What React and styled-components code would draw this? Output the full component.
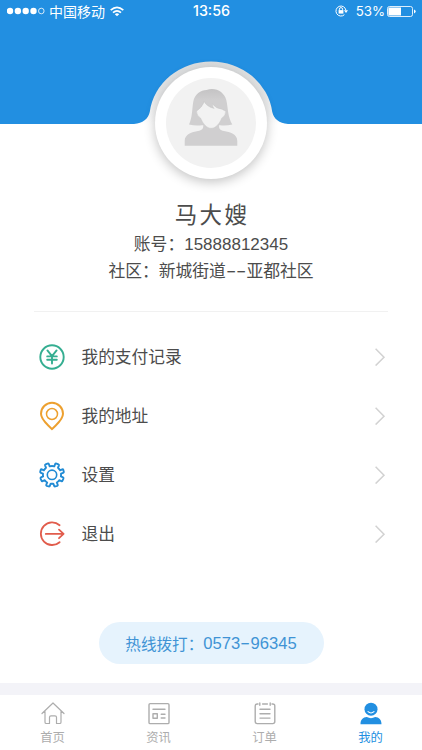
import React from "react";
import styled, { createGlobalStyle } from "styled-components";

const BLUE = "#228fe1";

const GlobalStyle = createGlobalStyle`
  * { box-sizing: border-box; }
  body {
    margin: 0;
    background: #fff;
    color: #4c4c4c;
    font-family: "Liberation Sans", "Noto Sans CJK SC", sans-serif;
  }
`;

const Screen = styled.div`
  width: 422px;
  height: 750px;
  display: flex;
  flex-direction: column;
  overflow: hidden;
  background: #fff;
`;

const Header = styled.header`
  position: relative;
  flex: none;
  height: 124px;
  background: ${BLUE};
`;

const StatusBar = styled.div`
  display: grid;
  grid-template-columns: 1fr 60px 1fr;
  align-items: center;
  height: 22px;
  padding: 0 6px 0 7px;
  color: #fff;
`;

const StatusGroup = styled.div`
  display: flex;
  align-items: center;
  justify-content: ${(p) => (p.$end ? "flex-end" : "flex-start")};
`;

const Carrier = styled.span`
  margin: 0 5px 0 3px;
  font: 400 14px/20px "Noto Sans CJK SC", sans-serif;
`;

const Clock = styled.span`
  text-align: center;
  font: 500 14.3px/22px Inter, sans-serif;
`;

const Percent = styled.span`
  margin: 0 2px 0 8px;
  font: 400 13.3px/22px Inter, sans-serif;
`;

const Notch = styled.svg`
  position: absolute;
  left: 131px;
  top: 54px;
`;

const Avatar = styled.div`
  position: absolute;
  left: 155px;
  top: 67px;
  width: 112px;
  height: 112px;
  display: grid;
  place-items: center;
  border-radius: 50%;
  background: #fff;
  box-shadow: 0 3px 12px rgba(0, 0, 0, 0.24);
`;

const Portrait = styled.svg`
  border-radius: 50%;
  background: #f2f2f2;
`;

const Profile = styled.section`
  display: flex;
  flex-direction: column;
  align-items: center;
  height: 188px;
  margin: 0 34px;
  padding-top: 76px;
  border-bottom: 1px solid #f1f1f1;
`;

const Name = styled.h1`
  margin: 0;
  padding-left: 2px;
  font-size: 22.5px;
  font-weight: 400;
  line-height: 32px;
  letter-spacing: 2.3px;
`;

const Detail = styled.p`
  margin: 0;
  font-size: 16.8px;
  line-height: 26px;
  white-space: nowrap;
`;

const AccountNumber = styled.span`
  font-size: 17px;
`;

const Dash = styled.span`
  display: inline-block;
  width: 10.3px;
  text-align: center;
  font-family: Inter, sans-serif;
  transform: scaleX(1.4);
`;

const Menu = styled.nav`
  display: flex;
  flex-direction: column;
  margin: 15px 34px 0;
`;

const MenuRow = styled.a`
  display: grid;
  grid-template-columns: 48px 1fr 14px;
  align-items: center;
  height: 59px;
  padding: 0 2px 0 0;
  font-size: 16.7px;
  line-height: 26px;
`;

const MenuLabel = styled.span`
  padding-top: 2px;
  margin-left: -0.5px;
`;

const MenuIcon = styled.svg`
  margin-left: 4px;
  overflow: visible;
`;

const Hotline = styled.a`
  display: flex;
  align-items: center;
  justify-content: center;
  align-self: center;
  width: 225px;
  height: 42px;
  margin-top: 59px;
  border-radius: 21px;
  background: #e6f3fd;
  color: #4093d5;
  font-size: 15.6px;
`;

const Digits = styled.span`
  font-size: 16.6px;
`;

const TabBar = styled.footer`
  display: grid;
  grid-template-columns: repeat(4, 106px);
  flex: none;
  height: 67px;
  margin-top: auto;
  margin-left: -0.5px;
  border-top: 12px solid #f3f3f8;
`;

const Tab = styled.a`
  display: flex;
  flex-direction: column;
  align-items: center;
  padding-top: 6px;
  color: ${(p) => (p.$active ? BLUE : "#adadad")};
  font: 400 12.3px/18px "Noto Sans CJK SC", sans-serif;
  gap: 2px;
`;

const line = { fill: "none", stroke: "currentColor", strokeLinecap: "round", strokeLinejoin: "round" };

function SignalDots() {
  return (
    <svg width="39" height="8" viewBox="0 0 39 8" fill="#fff">
      {[3, 10.9, 18.7, 26.5].map((x) => <circle key={x} cx={x} cy="4" r="3.2" />)}
      <circle cx="34.3" cy="4" r="2.8" fill="none" stroke="#fff" strokeWidth=".8" />
    </svg>
  );
}

function Wifi() {
  return (
    <svg width="14" height="11" viewBox="0 0 14 11" fill="none" stroke="#fff" strokeWidth="1.7">
      <path d="M.7 4.2Q7-1.6 13.3 4.2M3 6.7Q7 3 11 6.7" />
      <path d="M7 10.2 4.8 8.2Q7 6.3 9.2 8.2Z" fill="#fff" stroke="none" />
    </svg>
  );
}

function RotationLock() {
  return (
    <svg width="13" height="12" viewBox="0 0 13 12" fill="none" stroke="#fff">
      <path d="M9.4 9.7A5 5 0 1 1 10.9 5.2" />
      <path d="M8.9 5.2H13L11 7.9Z" fill="#fff" stroke="none" />
      <path d="M4.4 5.3V4.2a1.6 1.6 0 0 1 3.2 0V5.3" />
      <rect x="3.6" y="5.1" width="4.8" height="3.5" fill="#fff" stroke="none" />
    </svg>
  );
}

function Battery() {
  return (
    <svg width="29" height="11" viewBox="0 0 29 11">
      <rect x=".5" y=".5" width="25" height="10" rx="2" fill="none" stroke="#fff" strokeOpacity=".85" />
      <path d="M2 1.4H14V9.6H2Q1.4 9.6 1.4 9V2Q1.4 1.4 2 1.4Z" fill="#fff" />
      <path d="M27 3.6Q28.7 4.2 28.7 5.5T27 7.4Z" fill="#fff" />
    </svg>
  );
}

function HeaderNotch() {
  return (
    <Notch width="160" height="71" viewBox="0 0 160 71">
      <defs>
        <linearGradient id="rim" x1="0" y1="0" x2="0" y2="1">
          <stop offset="0" stopColor="#dcdedf" />
          <stop offset=".5" stopColor="#e6e7e8" />
          <stop offset="1" stopColor="#fff" />
        </linearGradient>
      </defs>
      <path
        d="M3 70C12 69 17 65 18.8 57A61.7 61.7 0 0 1 141.2 57C143 65 148 69 157 70V71H3Z"
        transform="translate(0 4.5) scale(1 .936)"
        fill="url(#rim)"
      />
    </Notch>
  );
}

function WomanPortrait() {
  return (
    <Portrait width="90" height="90" viewBox="0 0 90 90">
      <defs>
        <linearGradient id="hair" x1="0" y1="0" x2="0" y2="1">
          <stop stopColor="#c4c3c4" />
          <stop offset=".3" stopColor="#d0cfd0" />
        </linearGradient>
      </defs>
      <path
        d="M23 46.5C26.5 39 26 31 27.2 24C28.5 16 35 12.2 40.5 12C50 9 58 14 60.3 22C62.3 31 61.5 38 66.3 46.5Q60 48 54 47.2H36Q29 48 23 46.5Z"
        fill="url(#hair)"
      />
      <path
        d="M18.7 67.7V63C18.7 56 26 54 32 53C36 52 37.3 51.5 37.3 47H53C53 51.5 54 52 58 53C64 54 71.3 56 71.3 63V67.7Z"
        fill="#d0cfd0"
      />
      <path
        d="M30.5 33.2Q36.2 29.3 38.3 23.7Q40.5 28.5 48.2 30.5Q46.5 29 46.4 26Q50.5 31 56 31.2Q57.5 32.3 59.8 33.2Q59.8 37.5 55.7 40.2C53.6 45.5 49.8 50.3 45.2 50.3S36.8 45.5 34.7 40.2Q30.5 37.5 30.5 33.2Z"
        fill="#f2f2f2"
        stroke="#c5c4c5"
        strokeWidth=".4"
      />
    </Portrait>
  );
}

function PaymentIcon() {
  return (
    <MenuIcon width="28" height="28" viewBox="0 0 28 28" {...line} color="#35ae91" strokeWidth="1.9">
      <circle cx="14" cy="14" r="11.7" />
      <path d="M9.4 7.4 14 13.2 18.6 7.4M14 13.2V20.6M9.2 13.4H18.8M9.2 16.7H18.8" />
    </MenuIcon>
  );
}

function AddressIcon() {
  return (
    <MenuIcon width="28" height="28" viewBox="0 0 28 28" {...line} color="#eda02f" strokeWidth="2">
      <path d="M14 27.2C10 22.5 3 18.3 3 11.8a11 11 0 0 1 22 0C25 18.3 18 22.5 14 27.2Z" />
      <circle cx="14" cy="12" r="5.5" strokeWidth="1.5" />
    </MenuIcon>
  );
}

function SettingsIcon() {
  return (
    <MenuIcon width="28" height="28" viewBox="0 0 28 28" {...line} color="#218bd4" strokeWidth="1.9">
      <path d="M11.7 5.3Q14 4.6 16.3 5.3L17.2 3Q17.6 2.2 18.5 2.6L20.4 3.4Q21.2 3.8 20.9 4.6L20 6.7Q21.4 8 22.1 9.3L24.2 8.4Q25 8.1 25.3 8.9L25.8 10.7Q26 11.5 25.2 11.8L23 12.7Q23.2 14 22.9 15.4L25 16.4Q25.7 16.8 25.4 17.6L24.5 19.6Q24.2 20.4 23.4 20.1L21.2 19.2Q20 20.8 18.8 21.5L19.7 23.7Q20 24.5 19.3 24.8L17.3 25.4Q16.5 25.7 16.2 24.9L15.3 22.7H12.7L11.8 24.9Q11.5 25.7 10.7 25.4L8.7 24.8Q8 24.5 8.3 23.7L9.2 21.5Q8 20.8 6.8 19.2L4.6 20.1Q3.8 20.4 3.5 19.6L2.6 17.6Q2.3 16.8 3 16.4L5.1 15.4Q4.8 14 5 12.7L2.8 11.8Q2 11.5 2.2 10.7L2.7 8.9Q3 8.1 3.8 8.4L5.9 9.3Q6.6 8 8 6.7L7.1 4.6Q6.8 3.8 7.6 3.4L9.5 2.6Q10.4 2.2 10.8 3Z" />
      <circle cx="14" cy="13.8" r="4.7" strokeWidth="1.6" />
    </MenuIcon>
  );
}

function ExitIcon() {
  return (
    <MenuIcon width="28" height="28" viewBox="0 0 28 28" {...line} color="#e15c4c" strokeWidth="1.8">
      <path d="M21.6 5.2A11.3 11.3 0 1 0 21.6 22.2M7.8 13.9H25.4M21 9.6 25.6 13.9 21 18.2" />
    </MenuIcon>
  );
}

function Chevron() {
  return (
    <svg width="14" height="18" viewBox="0 0 14 18" fill="none" stroke="#d2d2d2" strokeWidth="1.5">
      <path d="M3.6.8 12 9.2 3.6 17.6" />
    </svg>
  );
}

function HomeIcon() {
  return (
    <svg width="26" height="25" viewBox="0 0 26 25" {...line} strokeWidth="1.2">
      <path d="M2 12.5 13 2 24 12.5M5 10.5V21.2Q5 22.5 6.3 22.5H9.5V16.2Q9.5 14.8 11 14.8H15Q16.5 14.8 16.5 16.2V22.5H19.7Q21 22.5 21 21.2V10.5" />
    </svg>
  );
}

function NewsIcon() {
  return (
    <svg width="26" height="25" viewBox="0 0 26 25" {...line} strokeWidth="1.4">
      <rect x="3" y="2.6" width="20" height="20" rx="1.2" />
      <path d="M7 8.3H19M15.2 13.2H19M15.2 17H19M7 12.7H11.3V17.2H7Z" />
    </svg>
  );
}

function OrderIcon() {
  return (
    <svg width="26" height="25" viewBox="0 0 26 25" {...line} strokeWidth="1.4">
      <path d="M6 3H5.2Q3.2 3 3.2 5V20.5Q3.2 22.6 5.2 22.6H20.8Q22.8 22.6 22.8 20.5V5Q22.8 3 20.8 3H20M10.6 3H15.4M7.8 2V4.2M18.2 2V4.2M8 8.3H18M8 12.7H18M8 17.1H18" />
    </svg>
  );
}

function MeIcon() {
  return (
    <svg width="26" height="25" viewBox="0 0 26 25" fill="currentColor">
      <circle cx="13" cy="8.2" r="6.5" />
      <path d="M2.5 23.2C2.5 18.5 5 16.5 8.8 16.1Q13 18.3 17.2 16.1C21 16.5 23.5 18.5 23.5 23.2Z" />
      <path d="M10 10.7Q13 13.3 16 10.7" fill="none" stroke="#fff" strokeWidth="1.1" strokeLinecap="round" />
    </svg>
  );
}

const menuItems = [
  ["我的支付记录", PaymentIcon],
  ["我的地址", AddressIcon],
  ["设置", SettingsIcon],
  ["退出", ExitIcon],
];

const tabs = [
  ["首页", HomeIcon],
  ["资讯", NewsIcon],
  ["订单", OrderIcon],
  ["我的", MeIcon],
];

export default function App() {
  return (
    <Screen>
      <GlobalStyle />
      <Header>
        <StatusBar>
          <StatusGroup>
            <SignalDots />
            <Carrier>中国移动</Carrier>
            <Wifi />
          </StatusGroup>
          <Clock>13:56</Clock>
          <StatusGroup $end>
            <RotationLock />
            <Percent>53%</Percent>
            <Battery />
          </StatusGroup>
        </StatusBar>
        <HeaderNotch />
        <Avatar>
          <WomanPortrait />
        </Avatar>
      </Header>
      <Profile>
        <Name>马大嫂</Name>
        <Detail>账号：<AccountNumber>15888812345</AccountNumber></Detail>
        <Detail>社区：新城街道<Dash>-</Dash><Dash>-</Dash>亚都社区</Detail>
      </Profile>
      <Menu>
        {menuItems.map(([label, Icon]) => (
          <MenuRow key={label}>
            <Icon />
            <MenuLabel>{label}</MenuLabel>
            <Chevron />
          </MenuRow>
        ))}
      </Menu>
      <Hotline>
        热线拨打：<Digits>0573<Dash>-</Dash>96345</Digits>
      </Hotline>
      <TabBar>
        {tabs.map(([label, Icon]) => (
          <Tab key={label} $active={label === "我的"}>
            <Icon />
            <span>{label}</span>
          </Tab>
        ))}
      </TabBar>
    </Screen>
  );
}
